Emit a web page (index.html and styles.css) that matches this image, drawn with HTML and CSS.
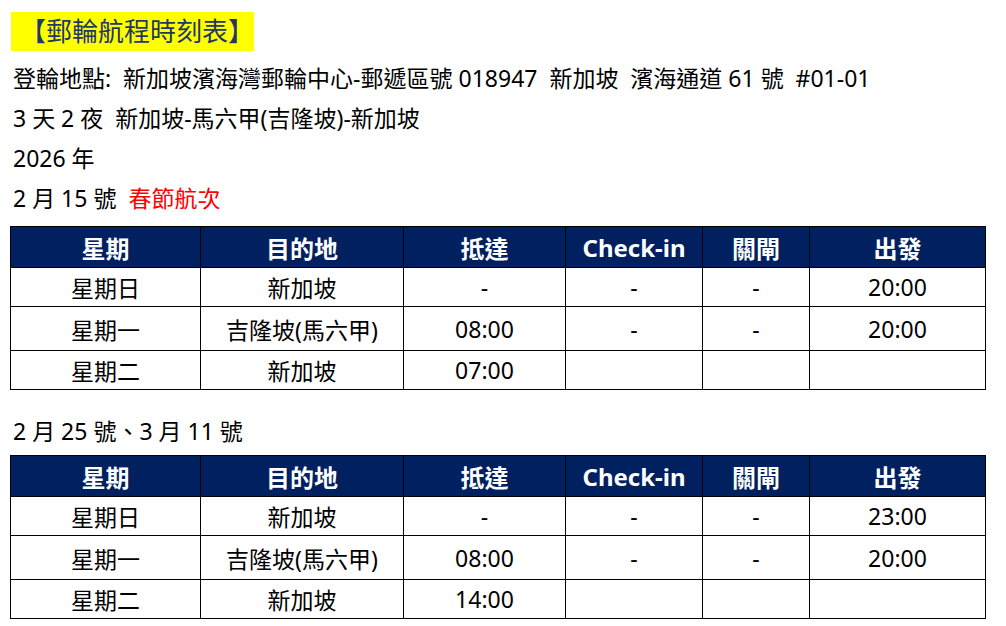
FILE: index.html
```html
<!DOCTYPE html>
<html lang="zh-Hant">
<head>
<meta charset="utf-8">
<title>郵輪航程時刻表</title>
<link rel="stylesheet" href="styles.css">
</head>
<body>
<div class="page">
  <div class="title-row"><h1 class="title">【郵輪航程時刻表】</h1></div>
  <div class="info">
    <p class="line">登輪地點:&nbsp; 新加坡濱海灣郵輪中心-郵遞區號 018947&nbsp; 新加坡&nbsp; 濱海通道 61 號&nbsp; #01-01</p>
    <p class="line">3 天 2 夜&nbsp; 新加坡-馬六甲(吉隆坡)-新加坡</p>
    <p class="line">2026 年</p>
    <p class="line">2 月 15 號&nbsp; <span class="red">春節航次</span></p>
  </div>
  <table class="sched">
    <colgroup>
      <col class="c1"><col class="c2"><col class="c3"><col class="c4"><col class="c5"><col class="c6">
    </colgroup>
    <thead>
      <tr class="hr"><th>星期</th><th>目的地</th><th>抵達</th><th>Check-in</th><th>關閘</th><th>出發</th></tr>
    </thead>
    <tbody>
      <tr class="r1"><td>星期日</td><td>新加坡</td><td>-</td><td>-</td><td>-</td><td>20:00</td></tr>
      <tr class="r2"><td>星期一</td><td>吉隆坡(馬六甲)</td><td>08:00</td><td>-</td><td>-</td><td>20:00</td></tr>
      <tr class="r3"><td>星期二</td><td>新加坡</td><td>07:00</td><td></td><td></td><td></td></tr>
    </tbody>
  </table>
  <p class="line sub">2 月 25 號、3 月 11 號</p>
  <table class="sched second">
    <colgroup>
      <col class="c1"><col class="c2"><col class="c3"><col class="c4"><col class="c5"><col class="c6">
    </colgroup>
    <thead>
      <tr class="hr"><th>星期</th><th>目的地</th><th>抵達</th><th>Check-in</th><th>關閘</th><th>出發</th></tr>
    </thead>
    <tbody>
      <tr class="r1"><td>星期日</td><td>新加坡</td><td>-</td><td>-</td><td>-</td><td>23:00</td></tr>
      <tr class="r2"><td>星期一</td><td>吉隆坡(馬六甲)</td><td>08:00</td><td>-</td><td>-</td><td>20:00</td></tr>
      <tr class="r3"><td>星期二</td><td>新加坡</td><td>14:00</td><td></td><td></td><td></td></tr>
    </tbody>
  </table>
</div>
</body>
</html>
```

FILE: styles.css
```css
html, body {
  margin: 0;
  padding: 0;
  background: #ffffff;
}
body {
  font-family: "Noto Sans", "Noto Sans CJK TC", sans-serif;
  color: #000;
}
.page {
  padding: 12px 0 0 10px;
}
.title-row {
  display: flex;
}
.title {
  margin: 0 0 0 1px;
  background: #ffff00;
  color: #1f3864;
  font-size: 26px;
  font-weight: normal;
  height: 39px;
  line-height: 39px;
  padding: 0 0 0 9px;
  white-space: nowrap;
}
.info {
  margin-top: 7px;
}
.line {
  margin: 0;
  padding-left: 3px;
  font-size: 23px;
  line-height: 40px;
  white-space: nowrap;
}
.red {
  color: #ff0000;
}
.sched {
  border-collapse: collapse;
  table-layout: fixed;
  width: 976px;
  margin-top: 8px;
}
.c1 { width: 190px; }
.c2 { width: 203px; }
.c3 { width: 162px; }
.c4 { width: 137px; }
.c5 { width: 107px; }
.c6 { width: 176px; }
.sched th, .sched td {
  border: 1px solid #000;
  text-align: center;
  padding: 0;
  white-space: nowrap;
  font-size: 23px;
}
.sched th {
  background: #002060;
  color: #fff;
  font-weight: bold;
  font-size: 24px;
}
.hr { height: 41px; }
.r1 { height: 39px; }
.r2 { height: 44px; }
.r3 { height: 39px; }
.sub {
  margin-top: 21px;
}
.second {
  margin-top: 4px;
}
```
